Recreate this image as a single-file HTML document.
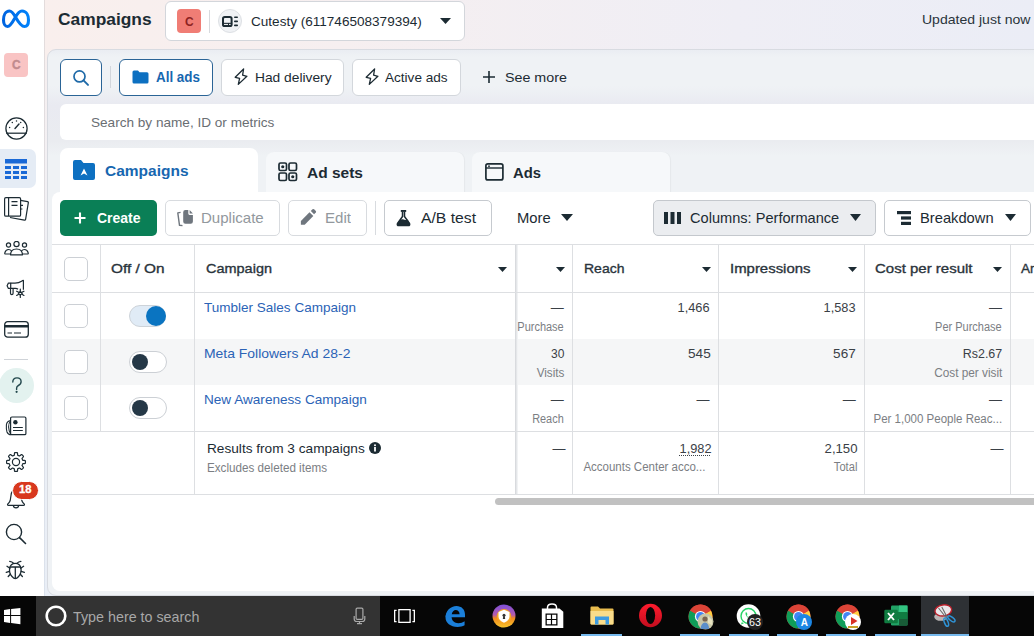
<!DOCTYPE html>
<html><head><meta charset="utf-8">
<style>
*{box-sizing:border-box;margin:0;padding:0}
html,body{width:1034px;height:636px;overflow:hidden;background:#fff;font-family:"Liberation Sans",sans-serif;color:#1c2b33}
.a{position:absolute}
.t{position:absolute;white-space:nowrap;line-height:1}
</style></head><body>

<div class="a" style="left:45px;top:0px;width:989px;height:596px;background:linear-gradient(180deg,#f8eeed 0%,#f3f0f3 25%,#ecf0f6 60%,#e9eef6 100%)"></div>
<div class="a" style="left:45px;top:0px;width:989px;height:60px;background:linear-gradient(90deg,#f9efed 0%,#f6eff0 30%,#efeef5 70%,#ebedf6 100%)"></div>
<div class="a" style="left:0px;top:0px;width:44px;height:596px;background:#fff"></div>
<div class="a" style="left:44px;top:0px;width:1px;height:596px;background:linear-gradient(180deg,#e3dcdc 0%,#dfe0e6 60%,#dbe2ec 100%)"></div>
<div class="a" style="left:47px;top:49px;width:1000px;height:547px;border:1px solid #d8dbe1;border-radius:9px;background:linear-gradient(180deg,#eaedf2 0px,#eff2f5 7px,#eff2f5 36px,#e9eaf1 55px,#eaecf0 91px,#eff2f5 106px,#eff2f5 100%)"></div>
<div class="t" style="left:57.8px;top:10.62px;font-size:17px;color:#1c2b33;font-weight:700;;transform:scaleX(1.0214);transform-origin:left top;">Campaigns</div>
<div class="a" style="left:165px;top:1px;width:300px;height:40px;background:#fff;border:1px solid #d3d6db;border-radius:6px"></div>
<div class="a" style="left:177px;top:9px;width:24px;height:24px;background:#f07d75;border-radius:4px"></div>
<div class="t" style="left:184.8px;top:14.60px;font-size:13px;color:#8d2222;font-weight:700;;transform:scaleX(0.9158);transform-origin:left top;">C</div>
<div class="a" style="left:209px;top:10px;width:1px;height:23px;background:#d7dade"></div>
<div class="a" style="left:218px;top:9px;width:24px;height:24px;background:#f0f2f5;border:1px solid #dde0e4;border-radius:50%"></div>
<svg class="a" style="left:221px;top:15px" width="18" height="13" viewBox="0 0 18 13"><rect x="2" y="2" width="8.6" height="9" rx="1.8" fill="none" stroke="#1c2b33" stroke-width="2"/><rect x="1.5" y="7.8" width="9.6" height="3.6" fill="#1c2b33"/><rect x="3" y="8.9" width="4" height="1" fill="#fff"/><rect x="8" y="8.9" width="1.6" height="1" fill="#fff"/><rect x="13" y="1.5" width="4" height="1.6" rx="0.8" fill="#1c2b33"/><rect x="13" y="5.6" width="4" height="1.6" rx="0.8" fill="#1c2b33"/><rect x="13" y="9.6" width="4" height="1.6" rx="0.8" fill="#1c2b33"/></svg>
<div class="t" style="left:250.6px;top:14.98px;font-size:13.5px;color:#1c2b33;font-weight:400;;transform:scaleX(1.0039);transform-origin:left top;">Cutesty (611746508379394)</div>
<svg class="a" style="left:440px;top:18px" width="11" height="6" viewBox="0 0 11 6"><path d="M0 0H11L5.5 6Z" fill="#1c2b33"/></svg>
<div class="t" style="right:3.2000000000000455px;top:12.96px;font-size:13.4px;color:#2a343b;font-weight:400;;transform:scaleX(1.0485);transform-origin:right top;">Updated just now</div>
<div class="a" style="left:60px;top:59px;width:42px;height:37px;background:#fff;border:1.5px solid #2a6496;border-radius:6px"></div>
<svg class="a" style="left:72px;top:69px" width="18" height="18" viewBox="0 0 18 18"><circle cx="7.5" cy="7.4" r="5.5" fill="none" stroke="#1f6aa8" stroke-width="1.7"/><path d="M11.5 11.4L16 15.9" stroke="#1f6aa8" stroke-width="2" stroke-linecap="round"/></svg>
<div class="a" style="left:110px;top:66px;width:1px;height:22px;background:#d2d6dc"></div>
<div class="a" style="left:119px;top:59px;width:94px;height:37px;background:#fff;border:1.5px solid #2a6496;border-radius:6px"></div>
<svg class="a" style="left:132px;top:70px" width="17" height="14" viewBox="0 0 17 14"><path d="M0.5 2Q0.5 0.5 2 0.5H6L7.5 2.2H15Q16.5 2.2 16.5 3.7V12Q16.5 13.5 15 13.5H2Q0.5 13.5 0.5 12Z" fill="#0d70c1"/></svg>
<div class="t" style="left:156px;top:70.83px;font-size:13.8px;color:#1767b0;font-weight:700;;transform:scaleX(0.9724);transform-origin:left top;">All ads</div>
<div class="a" style="left:221px;top:59px;width:123px;height:37px;background:#fff;border:1px solid #d3d7dc;border-radius:6px"></div>
<svg class="a" style="left:232px;top:66px" width="18" height="22" viewBox="0 0 18 22"><path d="M11.6 3L3.2 11.3L7.6 12.3L6.3 18.4L14.9 10.3L10.6 9.2Z" fill="none" stroke="#1c2b33" stroke-width="1.3" stroke-linejoin="round"/></svg>
<div class="t" style="left:254.6px;top:70.86px;font-size:13.4px;color:#1c2b33;font-weight:400;;transform:scaleX(1.0291);transform-origin:left top;">Had delivery</div>
<div class="a" style="left:352px;top:59px;width:109px;height:37px;background:#fff;border:1px solid #d3d7dc;border-radius:6px"></div>
<svg class="a" style="left:362.5px;top:66px" width="18" height="22" viewBox="0 0 18 22"><path d="M11.6 3L3.2 11.3L7.6 12.3L6.3 18.4L14.9 10.3L10.6 9.2Z" fill="none" stroke="#1c2b33" stroke-width="1.3" stroke-linejoin="round"/></svg>
<div class="t" style="left:385.4px;top:70.86px;font-size:13.4px;color:#1c2b33;font-weight:400;;transform:scaleX(1.0133);transform-origin:left top;">Active ads</div>
<svg class="a" style="left:482px;top:70px" width="14" height="14" viewBox="0 0 14 14"><path d="M7 1V13M1 7H13" stroke="#1c2b33" stroke-width="1.6"/></svg>
<div class="t" style="left:505.3px;top:70.86px;font-size:13.4px;color:#1c2b33;font-weight:400;;transform:scaleX(1.0661);transform-origin:left top;">See more</div>
<div class="a" style="left:60px;top:104px;width:990px;height:36px;background:#fff;border-radius:6px"></div>
<div class="t" style="left:90.6px;top:115.80px;font-size:13px;color:#6a6e73;font-weight:400;;transform:scaleX(1.0446);transform-origin:left top;">Search by name, ID or metrics</div>
<div class="a" style="left:266px;top:152px;width:198px;height:44px;background:#f6f8fa;border-radius:8px 8px 0 0;box-shadow:1px 0 1px rgba(0,0,0,0.04)"></div>
<div class="a" style="left:472px;top:152px;width:198px;height:44px;background:#f6f8fa;border-radius:8px 8px 0 0;box-shadow:1px 0 1px rgba(0,0,0,0.04)"></div>
<div class="a" style="left:52px;top:192px;width:1000px;height:399px;background:#fff;border-radius:8px"></div>
<div class="a" style="left:60px;top:148px;width:198px;height:50px;background:#fff;border-radius:8px 8px 0 0"></div>
<svg class="a" style="left:73px;top:160px" width="22" height="20" viewBox="0 0 22 20"><path d="M0 2Q0 0 2 0H8L10.5 3H20Q22 3 22 5V18Q22 20 20 20H2Q0 20 0 18Z" fill="#0d70c1"/><path d="M7.5 15.5L11 8.5L14.5 15.5L11 13.5Z" fill="#fff"/></svg>
<div class="t" style="left:104.9px;top:163.36px;font-size:15.3px;color:#1767b0;font-weight:700;;transform:scaleX(1.0127);transform-origin:left top;">Campaigns</div>
<svg class="a" style="left:278px;top:162px" width="20" height="20" viewBox="0 0 20 20"><rect x="1" y="1" width="7.5" height="7.5" rx="1.5" fill="none" stroke="#1c2b33" stroke-width="1.7"/><rect x="11" y="1" width="7.5" height="7.5" rx="1.5" fill="none" stroke="#1c2b33" stroke-width="1.7"/><rect x="1" y="11" width="7.5" height="7.5" rx="1.5" fill="none" stroke="#1c2b33" stroke-width="1.7"/><rect x="11" y="11" width="7.5" height="7.5" rx="1.5" fill="none" stroke="#1c2b33" stroke-width="1.7"/><circle cx="4.75" cy="4.75" r="1.6" fill="#1c2b33"/><circle cx="14.75" cy="14.75" r="1.6" fill="#1c2b33"/></svg>
<div class="t" style="left:307px;top:164.66px;font-size:15.3px;color:#1c2b33;font-weight:700;;transform:scaleX(1.0133);transform-origin:left top;">Ad sets</div>
<svg class="a" style="left:485px;top:163px" width="19" height="18" viewBox="0 0 19 18"><rect x="0.9" y="0.9" width="17" height="16" rx="2" fill="none" stroke="#1c2b33" stroke-width="1.7"/><path d="M1 5H18" stroke="#1c2b33" stroke-width="1.4"/><circle cx="4" cy="3.2" r="0.9" fill="#1c2b33"/></svg>
<div class="t" style="left:513px;top:164.66px;font-size:15.3px;color:#1c2b33;font-weight:700;;transform:scaleX(0.9686);transform-origin:left top;">Ads</div>
<div class="a" style="left:60px;top:200px;width:97px;height:36px;background:#0a7f56;border-radius:5px"></div>
<svg class="a" style="left:74px;top:211.5px" width="12" height="12" viewBox="0 0 12 12"><path d="M6 0.5V11.5M0.5 6H11.5" stroke="#fff" stroke-width="2.1"/></svg>
<div class="t" style="left:96.5px;top:210.93px;font-size:14.5px;color:#fff;font-weight:700;;transform:scaleX(0.9637);transform-origin:left top;">Create</div>
<div class="a" style="left:165px;top:200px;width:115px;height:36px;background:#fff;border:1px solid #d8dbdf;border-radius:5px"></div>
<svg class="a" style="left:176px;top:209px" width="18" height="18" viewBox="0 0 18 18"><path d="M7.2 3.3Q7.2 1.1 9.4 1.1H12.3V4.6Q12.3 6 13.6 6H16.9V12.5Q16.9 14.7 14.7 14.7H9.4Q7.2 14.7 7.2 12.5Z" fill="#6f767e"/><path d="M13.6 1.1L16.9 4.5H13.6Z" fill="#6f767e"/><path d="M4.6 3.4L1.8 3.9L3.5 16.3L6.5 16.6" fill="none" stroke="#6f767e" stroke-width="1.4" stroke-linejoin="round"/></svg>
<div class="t" style="left:200.9px;top:210.93px;font-size:14.5px;color:#92989d;font-weight:400;;transform:scaleX(1.0372);transform-origin:left top;">Duplicate</div>
<div class="a" style="left:288px;top:200px;width:79px;height:36px;background:#fff;border:1px solid #d8dbdf;border-radius:5px"></div>
<svg class="a" style="left:300px;top:208px" width="17" height="18" viewBox="0 0 17 18"><path d="M0.9 16.7L0.9 12.9L9.5 4.3L13.3 8.1L4.7 16.7Z" fill="#6f767e"/><path d="M10.8 3L12.5 1.3Q13.3 0.6 14.1 1.3L15.8 3Q16.5 3.8 15.8 4.6L14.1 6.3Z" fill="#6f767e"/></svg>
<div class="t" style="left:324.6px;top:210.93px;font-size:14.5px;color:#92989d;font-weight:400;;transform:scaleX(1.0400);transform-origin:left top;">Edit</div>
<div class="a" style="left:375px;top:201px;width:1px;height:34px;background:#d8dbdf"></div>
<div class="a" style="left:384px;top:200px;width:108px;height:36px;background:#fff;border:1px solid #c6cacf;border-radius:5px"></div>
<svg class="a" style="left:396px;top:209px" width="16" height="18" viewBox="0 0 16 18"><path d="M6.5 2.5V7.5L1.5 14.5Q0.8 16.5 2.8 16.5H12.2Q14.2 16.5 13.5 14.5L8.5 7.5V2.5" fill="none" stroke="#1c2b33" stroke-width="1.5" stroke-linejoin="round"/><rect x="4.8" y="1" width="5.4" height="1.9" fill="#1c2b33"/><path d="M3.2 11.2Q6 9.6 8 10.6Q10 11.6 11.8 10.6L13.5 14.5Q14.2 16.5 12.2 16.5H2.8Q0.8 16.5 1.5 14.5Z" fill="#1c2b33"/></svg>
<div class="t" style="left:420.9px;top:210.93px;font-size:14.5px;color:#1c2b33;font-weight:400;;transform:scaleX(1.0831);transform-origin:left top;">A/B test</div>
<div class="t" style="left:516.8px;top:210.93px;font-size:14.5px;color:#1c2b33;font-weight:400;;transform:scaleX(1.0198);transform-origin:left top;">More</div>
<svg class="a" style="left:561px;top:214px" width="12" height="7" viewBox="0 0 12 7"><path d="M0 0H12L6 7Z" fill="#1c2b33"/></svg>
<div class="a" style="left:653px;top:200px;width:223px;height:36px;background:#ebedf0;border:1px solid #c4c8cd;border-radius:5px"></div>
<svg class="a" style="left:664px;top:212px" width="17" height="12" viewBox="0 0 17 12"><rect x="0" y="0" width="4" height="12" fill="#1c2b33"/><rect x="6.5" y="0" width="4" height="12" fill="#1c2b33"/><rect x="13" y="0" width="4" height="12" fill="#1c2b33"/></svg>
<div class="t" style="left:689.5px;top:210.93px;font-size:14.5px;color:#1c2b33;font-weight:400;;transform:scaleX(1.0062);transform-origin:left top;">Columns: Performance</div>
<svg class="a" style="left:850px;top:214px" width="11" height="7" viewBox="0 0 11 7"><path d="M0 0H11L5.5 7Z" fill="#1c2b33"/></svg>
<div class="a" style="left:884px;top:200px;width:147px;height:36px;background:#fff;border:1px solid #c6cacf;border-radius:5px"></div>
<svg class="a" style="left:897px;top:211px" width="15" height="14" viewBox="0 0 15 14"><rect x="0" y="0" width="14" height="3.2" fill="#1c2b33"/><rect x="4" y="5.4" width="10" height="3.2" fill="#1c2b33"/><rect x="4" y="10.8" width="10" height="3.2" fill="#1c2b33"/></svg>
<div class="t" style="left:920.4px;top:210.93px;font-size:14.5px;color:#1c2b33;font-weight:400;;transform:scaleX(1.0145);transform-origin:left top;">Breakdown</div>
<svg class="a" style="left:1005px;top:214px" width="11" height="7" viewBox="0 0 11 7"><path d="M0 0H11L5.5 7Z" fill="#1c2b33"/></svg>
<div class="a" style="left:52px;top:339px;width:982px;height:46px;background:#f5f6f7"></div>
<div class="a" style="left:515px;top:244px;width:3px;height:250px;background:linear-gradient(90deg,#d2d4d8,#eceef0 70%,#f7f8f9)"></div>
<div class="a" style="left:52px;top:244px;width:982px;height:1px;background:#dddfe2"></div>
<div class="a" style="left:52px;top:292px;width:982px;height:1px;background:#dddfe2"></div>
<div class="a" style="left:52px;top:431px;width:982px;height:1px;background:#dddfe2"></div>
<div class="a" style="left:52px;top:494px;width:982px;height:1px;background:#dddfe2"></div>
<div class="a" style="left:100px;top:244px;width:1px;height:187px;background:#dddfe2"></div>
<div class="a" style="left:194px;top:244px;width:1px;height:250px;background:#dddfe2"></div>
<div class="a" style="left:572px;top:244px;width:1px;height:250px;background:#dddfe2"></div>
<div class="a" style="left:718px;top:244px;width:1px;height:250px;background:#dddfe2"></div>
<div class="a" style="left:864px;top:244px;width:1px;height:250px;background:#dddfe2"></div>
<div class="a" style="left:1010px;top:244px;width:1px;height:250px;background:#dddfe2"></div>
<div class="a" style="left:64px;top:257px;width:24px;height:24px;background:#fff;border:1px solid #ccd0d5;border-radius:5px"></div>
<div class="t" style="left:111.4px;top:261.99px;font-size:13.6px;color:#2a343c;font-weight:400;-webkit-text-stroke:0.35px #2a343c;transform:scaleX(1.1318);transform-origin:left top;">Off / On</div>
<div class="t" style="left:205.5px;top:261.99px;font-size:13.6px;color:#2a343c;font-weight:400;-webkit-text-stroke:0.35px #2a343c;transform:scaleX(1.0651);transform-origin:left top;">Campaign</div>
<div class="t" style="left:583.5px;top:261.79px;font-size:13.6px;color:#2a343c;font-weight:400;-webkit-text-stroke:0.35px #2a343c;transform:scaleX(1.0306);transform-origin:left top;">Reach</div>
<div class="t" style="left:729.5px;top:261.79px;font-size:13.6px;color:#2a343c;font-weight:400;-webkit-text-stroke:0.35px #2a343c;transform:scaleX(1.0985);transform-origin:left top;">Impressions</div>
<div class="t" style="left:875px;top:261.79px;font-size:13.6px;color:#2a343c;font-weight:400;-webkit-text-stroke:0.35px #2a343c;transform:scaleX(1.1029);transform-origin:left top;">Cost per result</div>
<div class="t" style="left:1021px;top:261.79px;font-size:13.6px;color:#2a343c;font-weight:400;-webkit-text-stroke:0.35px #2a343c;">Am</div>
<svg class="a" style="left:498px;top:267px" width="9" height="5" viewBox="0 0 9 5"><path d="M0 0H9L4.5 5Z" fill="#1c2b33"/></svg>
<svg class="a" style="left:555.5px;top:267px" width="9" height="5" viewBox="0 0 9 5"><path d="M0 0H9L4.5 5Z" fill="#1c2b33"/></svg>
<svg class="a" style="left:701.5px;top:267px" width="9" height="5" viewBox="0 0 9 5"><path d="M0 0H9L4.5 5Z" fill="#1c2b33"/></svg>
<svg class="a" style="left:847.5px;top:267px" width="9" height="5" viewBox="0 0 9 5"><path d="M0 0H9L4.5 5Z" fill="#1c2b33"/></svg>
<svg class="a" style="left:993.3px;top:267px" width="9" height="5" viewBox="0 0 9 5"><path d="M0 0H9L4.5 5Z" fill="#1c2b33"/></svg>
<div class="a" style="left:64px;top:304px;width:24px;height:24px;background:#fff;border:1px solid #ccd0d5;border-radius:5px"></div>
<div class="a" style="left:129px;top:305px;width:37px;height:22px;background:#e0ebf6;border:1px solid #cdd3d9;border-radius:11px"></div>
<div class="a" style="left:146px;top:305.8px;width:20px;height:20px;background:#0a74c1;border-radius:50%"></div>
<div class="t" style="left:203.6px;top:300.58px;font-size:13.5px;color:#2b63b6;font-weight:400;;transform:scaleX(1.0011);transform-origin:left top;">Tumbler Sales Campaign</div>
<div class="a" style="left:64px;top:350px;width:24px;height:24px;background:#fff;border:1px solid #ccd0d5;border-radius:5px"></div>
<div class="a" style="left:129px;top:351px;width:38px;height:22px;background:#fff;border:1px solid #ccd0d5;border-radius:11px"></div>
<div class="a" style="left:132px;top:354px;width:16px;height:16px;background:#253847;border-radius:50%"></div>
<div class="t" style="left:203.6px;top:346.58px;font-size:13.5px;color:#2b63b6;font-weight:400;;transform:scaleX(1.0322);transform-origin:left top;">Meta Followers Ad 28-2</div>
<div class="a" style="left:64px;top:396px;width:24px;height:24px;background:#fff;border:1px solid #ccd0d5;border-radius:5px"></div>
<div class="a" style="left:129px;top:397px;width:38px;height:22px;background:#fff;border:1px solid #ccd0d5;border-radius:11px"></div>
<div class="a" style="left:132px;top:400px;width:16px;height:16px;background:#253847;border-radius:50%"></div>
<div class="t" style="left:203.6px;top:392.58px;font-size:13.5px;color:#2b63b6;font-weight:400;;transform:scaleX(1.0059);transform-origin:left top;">New Awareness Campaign</div>
<div class="t" style="right:470.20000000000005px;top:301.40px;font-size:13px;color:#3a4046;font-weight:400;;">&mdash;</div>
<div class="t" style="right:470.20000000000005px;top:320.85px;font-size:12px;color:#7b7e83;font-weight:400;;transform:scaleX(0.9151);transform-origin:right top;">Purchase</div>
<div class="t" style="right:324.70000000000005px;top:301.40px;font-size:13px;color:#3a4046;font-weight:400;;transform:scaleX(0.9832);transform-origin:right top;">1,466</div>
<div class="t" style="right:178.20000000000005px;top:301.40px;font-size:13px;color:#3a4046;font-weight:400;;transform:scaleX(0.9832);transform-origin:right top;">1,583</div>
<div class="t" style="right:32px;top:301.40px;font-size:13px;color:#3a4046;font-weight:400;;">&mdash;</div>
<div class="t" style="right:32px;top:320.85px;font-size:12px;color:#7b7e83;font-weight:400;;transform:scaleX(0.9161);transform-origin:right top;">Per Purchase</div>
<div class="t" style="right:470px;top:347.40px;font-size:13px;color:#3a4046;font-weight:400;;transform:scaleX(0.9261);transform-origin:right top;">30</div>
<div class="t" style="right:470px;top:366.85px;font-size:12px;color:#7b7e83;font-weight:400;;transform:scaleX(0.9770);transform-origin:right top;">Visits</div>
<div class="t" style="right:323.79999999999995px;top:347.40px;font-size:13px;color:#3a4046;font-weight:400;;transform:scaleX(1.0459);transform-origin:right top;">545</div>
<div class="t" style="right:178.20000000000005px;top:347.40px;font-size:13px;color:#3a4046;font-weight:400;;transform:scaleX(1.0413);transform-origin:right top;">567</div>
<div class="t" style="right:32px;top:347.40px;font-size:13px;color:#3a4046;font-weight:400;;transform:scaleX(0.9562);transform-origin:right top;">Rs2.67</div>
<div class="t" style="right:32px;top:366.85px;font-size:12px;color:#7b7e83;font-weight:400;;transform:scaleX(0.9833);transform-origin:right top;">Cost per visit</div>
<div class="t" style="right:470.20000000000005px;top:393.40px;font-size:13px;color:#3a4046;font-weight:400;;">&mdash;</div>
<div class="t" style="right:470px;top:412.85px;font-size:12px;color:#7b7e83;font-weight:400;;transform:scaleX(0.9081);transform-origin:right top;">Reach</div>
<div class="t" style="right:324.5px;top:393.40px;font-size:13px;color:#3a4046;font-weight:400;;">&mdash;</div>
<div class="t" style="right:178.20000000000005px;top:393.40px;font-size:13px;color:#3a4046;font-weight:400;;">&mdash;</div>
<div class="t" style="right:32px;top:393.40px;font-size:13px;color:#3a4046;font-weight:400;;">&mdash;</div>
<div class="t" style="right:32px;top:412.85px;font-size:12px;color:#7b7e83;font-weight:400;;transform:scaleX(0.9590);transform-origin:right top;">Per 1,000 People Reac...</div>
<div class="t" style="left:207.3px;top:441.58px;font-size:13.5px;color:#1c2b33;font-weight:400;;transform:scaleX(1.0105);transform-origin:left top;">Results from 3 campaigns</div>
<svg class="a" style="left:369px;top:441.8px" width="12" height="12" viewBox="0 0 12 12"><circle cx="6" cy="6" r="6" fill="#1c2b33"/><rect x="5.1" y="5" width="1.8" height="4.5" fill="#fff"/><circle cx="6" cy="3.2" r="1" fill="#fff"/></svg>
<div class="t" style="left:207.3px;top:461.55px;font-size:12px;color:#7b7e83;font-weight:400;;transform:scaleX(0.9724);transform-origin:left top;">Excludes deleted items</div>
<div class="t" style="right:468.5px;top:442.40px;font-size:13px;color:#3a4046;font-weight:400;;">&mdash;</div>
<div class="t" style="right:322.70000000000005px;top:442.40px;font-size:13px;color:#3a4046;font-weight:400;;transform:scaleX(0.9832);transform-origin:right top;">1,982</div>
<div class="a" style="left:679px;top:455px;width:32px;height:1px;background-image:linear-gradient(90deg,#3a4046 50%,transparent 50%);background-size:2px 1px"></div>
<div class="t" style="right:329px;top:461.35px;font-size:12px;color:#7b7e83;font-weight:400;;transform:scaleX(0.9576);transform-origin:right top;">Accounts Center acco...</div>
<div class="t" style="right:176px;top:442.40px;font-size:13px;color:#3a4046;font-weight:400;;transform:scaleX(1.0139);transform-origin:right top;">2,150</div>
<div class="t" style="right:176.70000000000005px;top:461.35px;font-size:12px;color:#7b7e83;font-weight:400;;transform:scaleX(0.9267);transform-origin:right top;">Total</div>
<div class="t" style="right:30.5px;top:442.40px;font-size:13px;color:#3a4046;font-weight:400;;">&mdash;</div>
<div class="a" style="left:495px;top:498px;width:560px;height:7px;background:#c1c1c1;border-radius:4px"></div>
<svg class="a" style="left:0px;top:5px" width="34" height="28" viewBox="0 0 34 28"><defs><linearGradient id="mg" x1="0" y1="0" x2="1" y2="0"><stop offset="0" stop-color="#0064e0"/><stop offset="1" stop-color="#0082fb"/></linearGradient></defs><path d="M15.5 12C13.5 8.5 12 6 9.5 6C5.5 6 3.5 10.5 3.5 15C3.5 19 5.3 21.5 7.5 21.5C10.5 21.5 13 16.5 15.5 12C18 7.5 19.5 6 22 6C26.5 6 28.5 10.5 28.5 15C28.5 19 27 21.5 24.5 21.5C21.5 21.5 18 16.5 15.5 12Z" fill="none" stroke="url(#mg)" stroke-width="3.1" stroke-linejoin="round"/></svg>
<div class="a" style="left:4px;top:53px;width:24px;height:24px;background:#f9c4c4;border-radius:4px"></div>
<div class="t" style="left:11.6px;top:58.20px;font-size:13px;color:#c18b8e;font-weight:700;-webkit-text-stroke:0.4px #c18b8e;transform:scaleX(0.9158);transform-origin:left top;">C</div>
<svg class="a" style="left:5px;top:117px" width="23" height="23" viewBox="0 0 23 23"><circle cx="11.5" cy="11.5" r="10.6" fill="none" stroke="#1c2b33" stroke-width="1.25"/><path d="M1.2 16.2H21.8" stroke="#1c2b33" stroke-width="1.25"/><path d="M10 11.5L14 7" stroke="#1c2b33" stroke-width="1.4" stroke-linecap="round"/><circle cx="4.6" cy="10.5" r="0.75" fill="#1c2b33"/><circle cx="7.3" cy="5.6" r="0.75" fill="#1c2b33"/><circle cx="11.5" cy="4" r="0.75" fill="#1c2b33"/><circle cx="18.4" cy="10.5" r="0.75" fill="#1c2b33"/><circle cx="15.7" cy="5.6" r="0.75" fill="#1c2b33"/></svg>
<div class="a" style="left:0px;top:149px;width:36px;height:39px;background:#e5ecf5;border-radius:0 7px 7px 0"></div>
<svg class="a" style="left:5px;top:159px" width="22" height="20" viewBox="0 0 22 20"><rect x="0" y="0" width="22" height="4.5" fill="#1a69d6"/><rect x="0" y="7" width="6" height="3" fill="#1a69d6"/><rect x="8" y="7" width="6" height="3" fill="#1a69d6"/><rect x="16" y="7" width="6" height="3" fill="#1a69d6"/><rect x="0" y="12" width="6" height="3" fill="#1a69d6"/><rect x="8" y="12" width="6" height="3" fill="#1a69d6"/><rect x="16" y="12" width="6" height="3" fill="#1a69d6"/><rect x="0" y="17" width="6" height="3" fill="#1a69d6"/><rect x="8" y="17" width="6" height="3" fill="#1a69d6"/><rect x="16" y="17" width="6" height="3" fill="#1a69d6"/></svg>
<svg class="a" style="left:4px;top:197px" width="25" height="25" viewBox="0 0 25 25"><path d="M16.5 3.3L23.6 4.7Q24.5 4.9 24.3 5.8L21.6 22.3Q21.4 23.3 20.4 23.1L6 20.5" fill="none" stroke="#1c2b33" stroke-width="1.2" stroke-linejoin="round"/><rect x="0.6" y="0.6" width="16" height="18.6" rx="1.3" fill="#fff" stroke="#1c2b33" stroke-width="1.2"/><path d="M4.6 0.8V19M7.5 4.6H13.5M7.5 8.4H13.5M16.8 8.4H19M16.8 12H18.4" stroke="#1c2b33" stroke-width="1.2"/></svg>
<svg class="a" style="left:4px;top:241px" width="25" height="15" viewBox="0 0 25 15"><circle cx="4.5" cy="4" r="2.1" fill="none" stroke="#1c2b33" stroke-width="1.2"/><circle cx="12.5" cy="3" r="2.6" fill="none" stroke="#1c2b33" stroke-width="1.2"/><circle cx="20.5" cy="4" r="2.1" fill="none" stroke="#1c2b33" stroke-width="1.2"/><path d="M7 13H1.5Q0.5 13 0.8 11.8Q1.8 8.5 4.5 8.5Q6.5 8.5 7.5 10" fill="none" stroke="#1c2b33" stroke-width="1.2"/><path d="M18 13H23.5Q24.5 13 24.2 11.8Q23.2 8.5 20.5 8.5Q18.5 8.5 17.5 10" fill="none" stroke="#1c2b33" stroke-width="1.2"/><path d="M6.5 13.8Q6.8 8 12.5 8Q18.2 8 18.5 13.8Z" fill="none" stroke="#1c2b33" stroke-width="1.2" stroke-linejoin="round"/></svg>
<svg class="a" style="left:6px;top:278px" width="20" height="21" viewBox="0 0 20 21"><path d="M4.7 5.1H2.4L1.1 7.75L2.4 10.4H4.7Z" fill="none" stroke="#1c2b33" stroke-width="1.2" stroke-linejoin="round"/><path d="M4.7 5.1H9Q13 5.1 15.5 3.2Q16.5 2.4 17.4 2.4V11.8" fill="none" stroke="#1c2b33" stroke-width="1.2" stroke-linejoin="round"/><path d="M4.7 10.4H9.5Q11 10.4 12 11.3" fill="none" stroke="#1c2b33" stroke-width="1.2"/><path d="M4.5 10.4V15.2Q4.5 16.6 5.8 16.6Q7.1 16.6 7.1 15.2V10.4" fill="none" stroke="#1c2b33" stroke-width="1.2"/><path d="M14.30 17.20L14.30 19.50M12.65 16.25L10.66 17.40M12.65 14.35L10.66 13.20M14.30 13.40L14.30 11.10M15.95 14.35L17.94 13.20M15.95 16.25L17.94 17.40" stroke="#1c2b33" stroke-width="1.2" stroke-linecap="round"/><path d="M14.3 13.4L16.2 15.3L14.3 17.2L12.4 15.3Z" fill="#fff" stroke="#1c2b33" stroke-width="1.1"/></svg>
<svg class="a" style="left:4px;top:321px" width="25" height="17" viewBox="0 0 25 17"><rect x="0.7" y="0.7" width="23.6" height="15.5" rx="3" fill="none" stroke="#1c2b33" stroke-width="1.3"/><rect x="0.7" y="4" width="23.6" height="2.5" fill="#1c2b33"/><path d="M3.5 12H8M10 12H17" stroke="#1c2b33" stroke-width="1.2"/></svg>
<div class="a" style="left:4px;top:359px;width:24px;height:1px;background:#cfd3d8"></div>
<div class="a" style="left:-1px;top:368px;width:35px;height:35px;background:#e3f2ef;border-radius:50%"></div>
<svg class="a" style="left:10px;top:376px" width="14" height="18" viewBox="0 0 14 18"><path d="M2.8 6Q2.8 1.9 7 1.9Q11.1 1.9 11.1 5.8Q11.1 8.2 8.4 9.5Q6.6 10.4 6.6 12.2V13.4" fill="none" stroke="#22474c" stroke-width="1.4" stroke-linecap="round"/><circle cx="6.6" cy="15.8" r="1.1" fill="#22474c"/></svg>
<svg class="a" style="left:5px;top:416px" width="22" height="20" viewBox="0 0 22 20"><rect x="5.6" y="1" width="15.3" height="17.7" rx="1.3" fill="none" stroke="#1c2b33" stroke-width="1.2"/><path d="M5.6 4.6Q1.9 5 1.4 8.8Q1.1 13 2 16Q2.9 18.7 6.2 18.7M5.6 5.2Q3.4 7.2 3.6 11Q3.8 15 5.6 17.6" fill="none" stroke="#1c2b33" stroke-width="1.1"/><circle cx="10.4" cy="6.3" r="2.2" fill="#1c2b33"/><path d="M8 11.5H17.8M8 14.5H17.8" stroke="#1c2b33" stroke-width="1.2"/></svg>
<svg class="a" style="left:4.8px;top:450.8px" width="22" height="22" viewBox="0 0 22 22"><path d="M11.00 1.60L11.25 1.60L11.49 1.61L11.74 1.63L11.98 1.65L12.23 1.68L12.43 1.95L12.56 2.61L12.61 3.41L12.67 4.06L12.79 4.34L12.96 4.38L13.13 4.44L13.30 4.50L13.47 4.56L13.64 4.63L13.81 4.70L13.97 4.77L14.13 4.85L14.29 4.94L14.45 5.02L14.73 4.91L15.23 4.49L15.83 3.97L16.38 3.59L16.72 3.54L16.92 3.69L17.10 3.85L17.29 4.01L17.47 4.18L17.65 4.35L17.82 4.53L17.99 4.71L18.15 4.90L18.31 5.08L18.46 5.28L18.41 5.62L18.03 6.17L17.51 6.77L17.09 7.27L16.98 7.55L17.06 7.71L17.15 7.87L17.23 8.03L17.30 8.19L17.37 8.36L17.44 8.53L17.50 8.70L17.56 8.87L17.62 9.04L17.66 9.21L17.94 9.33L18.59 9.39L19.39 9.44L20.05 9.57L20.32 9.77L20.35 10.02L20.37 10.26L20.39 10.51L20.40 10.75L20.40 11.00L20.40 11.25L20.39 11.49L20.37 11.74L20.35 11.98L20.32 12.23L20.05 12.43L19.39 12.56L18.59 12.61L17.94 12.67L17.66 12.79L17.62 12.96L17.56 13.13L17.50 13.30L17.44 13.47L17.37 13.64L17.30 13.81L17.23 13.97L17.15 14.13L17.06 14.29L16.98 14.45L17.09 14.73L17.51 15.23L18.03 15.83L18.41 16.38L18.46 16.72L18.31 16.92L18.15 17.10L17.99 17.29L17.82 17.47L17.65 17.65L17.47 17.82L17.29 17.99L17.10 18.15L16.92 18.31L16.72 18.46L16.38 18.41L15.83 18.03L15.23 17.51L14.73 17.09L14.45 16.98L14.29 17.06L14.13 17.15L13.97 17.23L13.81 17.30L13.64 17.37L13.47 17.44L13.30 17.50L13.13 17.56L12.96 17.62L12.79 17.66L12.67 17.94L12.61 18.59L12.56 19.39L12.43 20.05L12.23 20.32L11.98 20.35L11.74 20.37L11.49 20.39L11.25 20.40L11.00 20.40L10.75 20.40L10.51 20.39L10.26 20.37L10.02 20.35L9.77 20.32L9.57 20.05L9.44 19.39L9.39 18.59L9.33 17.94L9.21 17.66L9.04 17.62L8.87 17.56L8.70 17.50L8.53 17.44L8.36 17.37L8.19 17.30L8.03 17.23L7.87 17.15L7.71 17.06L7.55 16.98L7.27 17.09L6.77 17.51L6.17 18.03L5.62 18.41L5.28 18.46L5.08 18.31L4.90 18.15L4.71 17.99L4.53 17.82L4.35 17.65L4.18 17.47L4.01 17.29L3.85 17.10L3.69 16.92L3.54 16.72L3.59 16.38L3.97 15.83L4.49 15.23L4.91 14.73L5.02 14.45L4.94 14.29L4.85 14.13L4.77 13.97L4.70 13.81L4.63 13.64L4.56 13.47L4.50 13.30L4.44 13.13L4.38 12.96L4.34 12.79L4.06 12.67L3.41 12.61L2.61 12.56L1.95 12.43L1.68 12.23L1.65 11.98L1.63 11.74L1.61 11.49L1.60 11.25L1.60 11.00L1.60 10.75L1.61 10.51L1.63 10.26L1.65 10.02L1.68 9.77L1.95 9.57L2.61 9.44L3.41 9.39L4.06 9.33L4.34 9.21L4.38 9.04L4.44 8.87L4.50 8.70L4.56 8.53L4.63 8.36L4.70 8.19L4.77 8.03L4.85 7.87L4.94 7.71L5.02 7.55L4.91 7.27L4.49 6.77L3.97 6.17L3.59 5.62L3.54 5.28L3.69 5.08L3.85 4.90L4.01 4.71L4.18 4.53L4.35 4.35L4.53 4.18L4.71 4.01L4.90 3.85L5.08 3.69L5.28 3.54L5.62 3.59L6.17 3.97L6.77 4.49L7.27 4.91L7.55 5.02L7.71 4.94L7.87 4.85L8.03 4.77L8.19 4.70L8.36 4.63L8.53 4.56L8.70 4.50L8.87 4.44L9.04 4.38L9.21 4.34L9.33 4.06L9.39 3.41L9.44 2.61L9.57 1.95L9.77 1.68L10.02 1.65L10.26 1.63L10.51 1.61L10.75 1.60Z" fill="none" stroke="#1c2b33" stroke-width="1.2" stroke-linejoin="round"/><circle cx="11" cy="11" r="3.6" fill="none" stroke="#1c2b33" stroke-width="1.2"/></svg>
<svg class="a" style="left:5px;top:486.8px" width="22" height="22" viewBox="0 0 22 22"><path d="M11 2.5Q6.5 2.5 6 8.5L5.2 13.5Q4.8 15 3.5 16.2Q2.2 17.2 2.5 17.8Q2.7 18.3 3.6 18.3H18.4Q19.3 18.3 19.5 17.8Q19.8 17.2 18.5 16.2Q17.2 15 16.8 13.5L16 8.5Q15.5 2.5 11 2.5Z" fill="none" stroke="#1c2b33" stroke-width="1.2" stroke-linejoin="round"/><path d="M8.3 18.5Q8.5 20.8 11 20.8Q13.5 20.8 13.7 18.5" fill="none" stroke="#1c2b33" stroke-width="1.2"/></svg>
<div class="a" style="left:11.5px;top:480.5px;width:27px;height:19px;background:#d8381e;border-radius:10px;border:1px solid #fff"></div>
<div class="t" style="left:18.9px;top:484.27px;font-size:11.5px;color:#fff;font-weight:700;-webkit-text-stroke:0.3px #fff;transform:scaleX(0.9768);transform-origin:left top;">18</div>
<svg class="a" style="left:5px;top:523px" width="22" height="22" viewBox="0 0 22 22"><circle cx="9" cy="9" r="7.6" fill="none" stroke="#1c2b33" stroke-width="1.4"/><path d="M14.6 14.6L20.5 20.5" stroke="#1c2b33" stroke-width="1.6" stroke-linecap="round"/></svg>
<svg class="a" style="left:4px;top:558px" width="23" height="23" viewBox="0 0 23 23"><path d="M5.7 3.3Q8 3.5 9.8 5.4M16.9 3.3Q14.6 3.5 12.8 5.4" fill="none" stroke="#1c2b33" stroke-width="1.3" stroke-linecap="round"/><path d="M11.3 5.4Q6.4 5.4 5.6 10.5Q5 15.5 8 18.5Q9.8 20.6 11.3 20.6Q12.8 20.6 14.6 18.5Q17.6 15.5 17 10.5Q16.2 5.4 11.3 5.4Z" fill="none" stroke="#1c2b33" stroke-width="1.3"/><path d="M6.2 9H16.4M11.3 9V20.4M3 8.3L5.9 10.3M2.2 14.4L5.4 13.4M4.2 18.5L6.3 16.2M19.6 8.3L16.7 10.3M20.4 14.4L17.2 13.4M18.4 18.5L16.3 16.2" fill="none" stroke="#1c2b33" stroke-width="1.3" stroke-linecap="round"/></svg>
<div class="a" style="left:0px;top:596px;width:1034px;height:40px;background:#060606"></div>
<div class="a" style="left:36px;top:596px;width:344px;height:40px;background:#333333"></div>
<svg class="a" style="left:4px;top:608px" width="17" height="17" viewBox="0 0 17 17"><path d="M0 1.9L6.1 1.1V7H0ZM7.1 0.95L16.4 0V7H7.1ZM0 8.1H6.1V14.9L0 14.1ZM7.1 8.1H16.4V16.2L7.1 15.05Z" fill="#fff"/></svg>
<svg class="a" style="left:45px;top:605px" width="22" height="22" viewBox="0 0 22 22"><circle cx="11" cy="11" r="9.3" fill="none" stroke="#fff" stroke-width="2.6"/></svg>
<div class="t" style="left:73px;top:609.41px;font-size:15px;color:#a8a8a8;font-weight:400;;transform:scaleX(0.9534);transform-origin:left top;">Type here to search</div>
<svg class="a" style="left:352px;top:606px" width="15" height="20" viewBox="0 0 15 20"><rect x="4.1" y="2.1" width="6.8" height="11.3" rx="1.2" fill="none" stroke="#a9a9a9" stroke-width="1.2"/><path d="M2.2 10V13Q2.2 15.5 4.7 15.5H10.3Q12.8 15.5 12.8 13V10M7.5 15.5V17.6M5 17.7H10" fill="none" stroke="#a9a9a9" stroke-width="1.2"/></svg>
<svg class="a" style="left:394px;top:609px" width="21" height="14" viewBox="0 0 21 14"><rect x="4.9" y="0.65" width="11.2" height="12.7" fill="none" stroke="#fff" stroke-width="1.3"/><path d="M2.6 1.3H0.65V12.7H2.6M18.4 1.3H20.35V12.7H18.4" fill="none" stroke="#fff" stroke-width="1.3"/></svg>
<svg class="a" style="left:444px;top:605px" width="22" height="22" viewBox="0 0 22 22"><path d="M1.5 12.5C1.5 6 6.5 1 12.5 1C17.5 1 21 4.5 21 9.5V12.3H7.6C7.9 16 10.6 18.2 14.3 18.2C16.8 18.2 18.9 17.4 20.6 16.2V20.3C18.6 21.4 16.2 21.9 13.6 21.9C6.3 21.9 1.5 17.8 1.5 12.5ZM7.7 9.2H15.6C15.6 6.6 13.9 4.9 11.7 4.9C9.8 4.9 8.2 6.6 7.7 9.2Z" fill="#1b7fd9"/><path d="M1.5 12C2.5 5.5 8 2 12 2.5C8.5 3.5 5.5 6 4.8 9.5Z" fill="#1b7fd9"/></svg>
<svg class="a" style="left:492px;top:604px" width="24" height="24" viewBox="0 0 24 24"><defs><linearGradient id="av" x1="0" y1="0" x2="0" y2="1"><stop offset="0" stop-color="#7e4fd8"/><stop offset="0.45" stop-color="#b25bb0"/><stop offset="0.6" stop-color="#f08a1f"/><stop offset="1" stop-color="#f8c42a"/></linearGradient></defs><circle cx="12" cy="12" r="11.5" fill="url(#av)"/><circle cx="12" cy="12.3" r="7.2" fill="#f6a623"/><path d="M12 5.8L17.5 8V12.5Q17.5 16.5 12 18.8Q6.5 16.5 6.5 12.5V8Z" fill="#fff"/><circle cx="12" cy="11.3" r="1.5" fill="#333"/><path d="M11.3 12L10.8 15H13.2L12.7 12Z" fill="#333"/></svg>
<svg class="a" style="left:541px;top:603px" width="23" height="26" viewBox="0 0 23 26"><path d="M6.5 6V4.5Q6.5 1 11 1Q15.5 1 15.5 4.5V6" fill="none" stroke="#fff" stroke-width="1.5"/><path d="M0.8 5.5H18.5L22.3 8.8V25H0.8Z" fill="#fff"/><path d="M4.5 10.5H16.5V22.5H4.5Z" fill="#060606"/><path d="M5.8 11.8H9.9V15.9H5.8ZM11.1 11.8H15.2V15.9H11.1ZM5.8 17.1H9.9V21.2H5.8ZM11.1 17.1H15.2V21.2H11.1Z" fill="#fff"/></svg>
<svg class="a" style="left:590px;top:606px" width="24" height="19" viewBox="0 0 24 19"><path d="M0.5 1.5Q0.5 0.5 1.5 0.5H8L10 2.5H22.5Q23.5 2.5 23.5 3.5V17.5Q23.5 18.5 22.5 18.5H1.5Q0.5 18.5 0.5 17.5Z" fill="#e9bd4f"/><path d="M0.5 5H23.5V17.5Q23.5 18.5 22.5 18.5H1.5Q0.5 18.5 0.5 17.5Z" fill="#f9dc8a"/><path d="M5 10.5H19V18.5H15.5V14H8.5V18.5H5Z" fill="#3d9be0"/></svg>
<div class="a" style="left:581px;top:634px;width:41px;height:2px;background:#76b9ed"></div>
<svg class="a" style="left:638px;top:603px" width="25" height="25" viewBox="0 0 25 25"><defs><linearGradient id="op" x1="0" y1="0" x2="0" y2="1"><stop offset="0" stop-color="#ff1b2d"/><stop offset="1" stop-color="#c20e1f"/></linearGradient></defs><ellipse cx="12.5" cy="12.5" rx="11.5" ry="11.8" fill="url(#op)"/><ellipse cx="12.5" cy="12.5" rx="4.6" ry="8.6" fill="#060606"/></svg>
<svg class="a" style="left:688px;top:604px" width="25" height="25" viewBox="0 0 26 26"><circle cx="13" cy="13" r="12.5" fill="#db4437"/><path d="M13 13L2.2 6.75A12.5 12.5 0 0 0 13 25.5Z" fill="#0f9d58"/><path d="M13 13L13 25.5A12.5 12.5 0 0 0 23.8 6.75Z" fill="#ffcd40"/><path d="M13 13L23.8 6.75A12.5 12.5 0 0 0 2.2 6.75Z" fill="#db4437"/><circle cx="13" cy="13" r="5.8" fill="#fff"/><circle cx="13" cy="13" r="4.6" fill="#4285f4"/></svg>
<svg class="a" style="left:697px;top:613px" width="17" height="17" viewBox="0 0 17 17"><circle cx="8.5" cy="8.5" r="8" fill="#c8c7a8"/><circle cx="8" cy="6" r="2.6" fill="#7a6650"/><path d="M3.5 16Q4 10 8 9.5Q12 10 12 16Z" fill="#5b8fc9"/><path d="M11 3L15 7V12L11 10Z" fill="#e8e3c0"/></svg>
<div class="a" style="left:680px;top:634px;width:40px;height:2px;background:#76b9ed"></div>
<svg class="a" style="left:736px;top:604px" width="25" height="24" viewBox="0 0 25 24"><circle cx="12.5" cy="12" r="11.8" fill="#fff"/><path d="M12.5 4.5A7.5 7.5 0 1 0 12.5 19.5A7.5 7.5 0 0 0 12.5 4.5Z" fill="none" stroke="#25d366" stroke-width="1.4"/><path d="M5.8 18L5 20.5L7.8 19.5" fill="#25d366"/><path d="M9.5 8.5Q9 12.5 14.5 15.5L15.8 14.5L14 13.3L13.2 14Q11.3 12.8 10.8 11L11.5 10.2L10.5 8.3Z" fill="#25d366"/></svg>
<div class="a" style="left:747px;top:614px;width:16px;height:16px;background:#222;border-radius:50%"></div>
<div class="t" style="left:749px;top:616.99px;font-size:11px;color:#fff;font-weight:400;;transform:scaleX(0.9796);transform-origin:left top;">63</div>
<div class="a" style="left:729px;top:634px;width:40px;height:2px;background:#76b9ed"></div>
<svg class="a" style="left:786px;top:604px" width="25" height="25" viewBox="0 0 26 26"><circle cx="13" cy="13" r="12.5" fill="#db4437"/><path d="M13 13L2.2 6.75A12.5 12.5 0 0 0 13 25.5Z" fill="#0f9d58"/><path d="M13 13L13 25.5A12.5 12.5 0 0 0 23.8 6.75Z" fill="#ffcd40"/><path d="M13 13L23.8 6.75A12.5 12.5 0 0 0 2.2 6.75Z" fill="#db4437"/><circle cx="13" cy="13" r="5.8" fill="#fff"/><circle cx="13" cy="13" r="4.6" fill="#4285f4"/></svg>
<div class="a" style="left:796px;top:614px;width:16px;height:16px;background:#1c86e3;border-radius:50%"></div>
<div class="t" style="left:800.7px;top:617.54px;font-size:10px;color:#fff;font-weight:700;;">A</div>
<div class="a" style="left:777px;top:634px;width:41px;height:2px;background:#76b9ed"></div>
<svg class="a" style="left:835px;top:604px" width="25" height="25" viewBox="0 0 26 26"><circle cx="13" cy="13" r="12.5" fill="#db4437"/><path d="M13 13L2.2 6.75A12.5 12.5 0 0 0 13 25.5Z" fill="#0f9d58"/><path d="M13 13L13 25.5A12.5 12.5 0 0 0 23.8 6.75Z" fill="#ffcd40"/><path d="M13 13L23.8 6.75A12.5 12.5 0 0 0 2.2 6.75Z" fill="#db4437"/><circle cx="13" cy="13" r="5.8" fill="#fff"/><circle cx="13" cy="13" r="4.6" fill="#4285f4"/></svg>
<div class="a" style="left:845px;top:614px;width:16px;height:16px;background:#fff;border-radius:50%"></div>
<svg class="a" style="left:850px;top:617px" width="8" height="8" viewBox="0 0 8 8"><path d="M1 0L7.5 4L1 8Z" fill="#d93025"/></svg>
<div class="a" style="left:848px;top:626px;width:10px;height:2px;background:#c9a227"></div>
<div class="a" style="left:826px;top:634px;width:40px;height:2px;background:#76b9ed"></div>
<svg class="a" style="left:884px;top:605px" width="24" height="21" viewBox="0 0 24 21"><rect x="7" y="0.5" width="16.5" height="20" rx="1.2" fill="#21a366"/><rect x="15" y="0.5" width="8.5" height="7" fill="#33c481"/><rect x="7" y="7" width="16.5" height="7" fill="#107c41"/><rect x="15" y="14" width="8.5" height="6.5" fill="#185c37"/><rect x="0.3" y="4.8" width="13.5" height="13.5" rx="1.2" fill="#107c41"/><path d="M4 8L10 15M10 8L4 15" stroke="#fff" stroke-width="1.9"/></svg>
<div class="a" style="left:875px;top:634px;width:41px;height:2px;background:#76b9ed"></div>
<div class="a" style="left:921px;top:596px;width:48px;height:40px;background:#2e3135"></div>
<svg class="a" style="left:933px;top:603px" width="24" height="26" viewBox="0 0 24 26"><ellipse cx="7.8" cy="13.8" rx="6.6" ry="4" fill="#b9b3b4"/><ellipse cx="10.3" cy="7.4" rx="8.4" ry="5.5" fill="#ebe7ea" stroke="#b8202c" stroke-width="1.4" transform="rotate(-8 10.3 7.4)"/><path d="M5.5 5L13.8 15.5M8.8 4L14.3 14.5" stroke="#6a6a6a" stroke-width="1.1"/><ellipse cx="13.2" cy="19.2" rx="1.8" ry="4.3" fill="none" stroke="#2f93d6" stroke-width="1.5" transform="rotate(-22 13.2 19.2)"/><ellipse cx="18.4" cy="15.8" rx="1.8" ry="4.3" fill="none" stroke="#2f93d6" stroke-width="1.5" transform="rotate(-52 18.4 15.8)"/></svg>
<div class="a" style="left:921px;top:634px;width:48px;height:2px;background:#76b9ed"></div>
</body></html>
